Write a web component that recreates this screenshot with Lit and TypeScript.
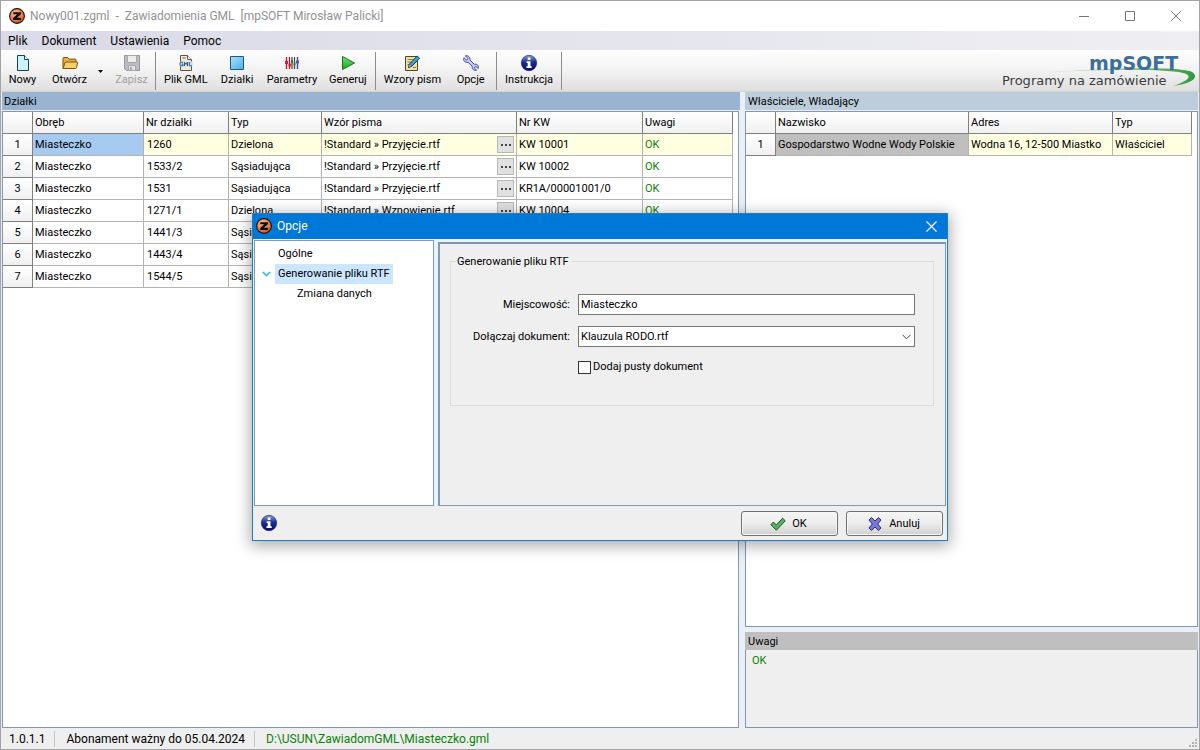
import { LitElement, html, svg, css, nothing } from "lit";
import { customElement, property, state } from "lit/decorators.js";
import { classMap } from "lit/directives/class-map.js";

const icons: Record<string, unknown> = {
  app: svg`
    <defs><radialGradient id="o" cx=".4" cy=".3" r=".8"><stop offset="0" stop-color="#ffb888"/><stop offset=".6" stop-color="#ee7840"/><stop offset="1" stop-color="#a8421a"/></radialGradient></defs>
    <circle cx="8" cy="8" r="7.400" fill="url(#o)" stroke="#1c1310" stroke-width="1.100"/>
    <path d="M4.300 4.200h7.600v2L7.900 9.800h4v2.200H4.200V9.900l4-3.600H4.300z" fill="#0c0806"/>`,
  nowy: svg`
    <path d="M2.500.5h7l4 4v11h-11z" fill="#c9f4fb" stroke="#1d3f52"/>
    <path d="M9.500.5v4h4" fill="#fff" stroke="#1d3f52"/>`,
  otworz: svg`
    <path d="M1 13.500V3.200q0-.7.7-.7h4l1.500 1.600h6q.8 0 .8.8v2" fill="#e8b03c" stroke="#7b5312"/>
    <path d="M1 13.500 3 7.700q.2-.7 1-.7h11.200q.6 0 .5.7l-1.300 5.100q-.2.7-1 .7z" fill="#f7d06c" stroke="#7b5312"/>`,
  zapisz: svg`
    <path d="M.5.5h15v15h-13l-2-2z" fill="#a9a9b6" stroke="#77777f"/>
    <path d="M3.500.5h9v7h-9z" fill="#ece9e6" stroke="#8c8c92"/>
    <path d="M4.500 10.500h7v5h-7z" fill="#dcdce0" stroke="#8c8c92"/>
    <path d="M6 12h2v3H6z" fill="#8c8c92"/>`,
  gml: svg`
    <path d="M2.500.5h7l4 4v11h-11z" fill="#f3ead2" stroke="#5b5648"/>
    <path d="M9.500.5v4h4M4.500 3h3" fill="#fff" stroke="#5b5648"/>
    <path d="M1.500 6.500h13v5h-13z" fill="#c8dcf0"/>
    <path d="M5 7.200H3Q2 7.200 2 9t1 1.800h2V9H4M6.500 11V7.200L8 9.500l1.500-2.300V11M11.300 7v3.800H14" fill="none" stroke="#2e5f94"/>`,
  dzialki: svg`
    <defs><linearGradient id="b" x2="1" y2="1"><stop offset="0" stop-color="#a9e0fb"/><stop offset="1" stop-color="#4db0e6"/></linearGradient></defs>
    <path d="M1.500 1.500h13v13h-13z" fill="url(#b)" stroke="#1d5a80"/>`,
  parametry: svg`
    <path d="M2.500 2v12M5.500 2v12" stroke="#c8102e" stroke-width="1.300"/>
    <path d="M8 2v12M10.500 2v12" stroke="#33502c" stroke-width="1.200"/>
    <path d="M13.500 2v12" stroke="#4b3ec0" stroke-width="1.400"/>
    <path d="M1 6h3v3H1zM4.500 8.500h2.500v3H4.500z" fill="#d6203a"/>
    <path d="M7 5h2v3H7zM9.500 7.500h2v3h-2z" fill="#2f7c33"/>
    <path d="M12 5.500h3v3h-3z" fill="#5d50d8"/>`,
  generuj: svg`
    <defs><linearGradient id="g" x2="0" y2="1"><stop offset="0" stop-color="#7be27a"/><stop offset="1" stop-color="#14a51c"/></linearGradient></defs>
    <path d="M2.500 1.500 14.500 8l-12 6.500z" fill="url(#g)" stroke="#14701a" stroke-linejoin="round"/>`,
  wzory: svg`
    <path d="M1.500 1.500h12v14h-12z" fill="#efe1a0" stroke="#4a4a2a"/>
    <path d="M3.500 4.500h7M3.500 7h5M3.500 9.500h3M9 12.500h3" stroke="#8b8350"/>
    <path d="M4.500 12.500 5.500 9l7.700-8 2.300 2.200-7.600 8z" fill="#3da0da" stroke="#123f66"/>
    <path d="M4.500 12.500 5.500 9l2.400 2.200z" fill="#f2c48a" stroke="#123f66" stroke-width=".6"/>`,
  opcje: svg`
    <path d="M2.300.9 5 3.500 3.600 5.200.9 2.700C-.2 5.200 1.700 8 5 7.300l4.200 3.900c-.5 2.900 2 4.900 4.400 4L11.300 13l1.400-1.700 2.500 2.200c.9-2.700-1.100-4.900-4-4.300L7 5.200C7.600 2.200 5 .1 2.300.9z" fill="#c3ccfa" stroke="#4747a8" stroke-linejoin="round"/>`,
  info: svg`
    <defs><linearGradient id="i" x2="0" y2="1"><stop offset="0" stop-color="#8e9fd8"/><stop offset=".45" stop-color="#1c2f92"/><stop offset="1" stop-color="#04086a"/></linearGradient></defs>
    <circle cx="8" cy="8" r="7.700" fill="url(#i)" stroke="#0d1a6e" stroke-width=".6"/>
    <path d="M6.700 2.600h2.800v2.500H6.700zM5.600 6.300h3.900v4.900h1.200v1.700H5.400v-1.700h1.300V8H5.600z" fill="#fff"/>`,
  ok: svg`<path d="M.8 8.700 3.400 6l2.900 3 6.300-6.800 2.700 2.600-8.900 9.400z" fill="#58b068" stroke="#1c5a24" stroke-linejoin="round"/>`,
  anuluj: svg`<path d="M2 4 4.600 1.600 8 5l3.400-3.400L14 4l-3.300 4 3.300 4-2.600 2.400L8 11l-3.400 3.400L2 12l3.300-4z" fill="#7a78da" stroke="#2c2a78" stroke-linejoin="round"/>`,
};

@customElement("ui-icon")
class UiIcon extends LitElement {
  @property() name = "";
  static styles = css`
    :host { display: block; width: 16px; height: 16px; flex: none; }
    svg { display: block; width: 100%; height: 100%; overflow: visible; }
  `;
  render() {
    return html`<svg viewBox="0 0 16 16" aria-hidden="true">${icons[this.name]}</svg>`;
  }
}

type Tool = { icon: string; label: string; disabled?: boolean; drop?: boolean };
const tools: Tool[][] = [
  [{ icon: "nowy", label: "Nowy" }, { icon: "otworz", label: "Otwórz", drop: true }, { icon: "zapisz", label: "Zapisz", disabled: true }],
  [{ icon: "gml", label: "Plik GML" }, { icon: "dzialki", label: "Działki" }, { icon: "parametry", label: "Parametry" }, { icon: "generuj", label: "Generuj" }],
  [{ icon: "wzory", label: "Wzory pism" }, { icon: "opcje", label: "Opcje" }],
  [{ icon: "info", label: "Instrukcja" }],
];

const parcels = [
  ["1260", "Dzielona", "Przyjęcie", "KW 10001"],
  ["1533/2", "Sąsiadująca", "Przyjęcie", "KW 10002"],
  ["1531", "Sąsiadująca", "Przyjęcie", "KR1A/00001001/0"],
  ["1271/1", "Dzielona", "Wznowienie", "KW 10004"],
  ["1441/3", "Sąsiadująca", "Przyjęcie", "KW 10005"],
  ["1443/4", "Sąsiadująca", "Przyjęcie", "KW 10006"],
  ["1544/5", "Sąsiadująca", "Przyjęcie", "KW 10007"],
];

@customElement("options-dialog")
class OptionsDialog extends LitElement {
  static styles = css`
    * { box-sizing: border-box; }
    :host {
      display: flex; flex-direction: column; background: #efefef; border: 1px solid #1f7bc4;
      box-shadow: 0 3px 14px 2px rgba(0, 0, 0, .32); font: 11px/14px Roboto, "Noto Sans", sans-serif; color: #000;
    }
    button, input, select { font: inherit; color: inherit; margin: 0; }
    .title { display: flex; align-items: center; gap: 5px; height: 25px; padding: 0 0 1px 3px; background: #0078d7; color: #fff; }
    .title h2 { flex: 1; margin: 0; font-size: 12px; font-weight: 400; }
    .close { width: 31px; height: 24px; padding: 0; border: 0; background: none; display: grid; place-items: center; }
    .body { flex: 1; display: flex; gap: 4px; padding: 1px 1px 0; background: #eaf2fa; }
    .tree { width: 180px; border: 1px solid #7d9ab8; background: #fff; margin: 0; padding: 3px 0 0 7px; list-style: none; }
    .node { display: flex; align-items: center; height: 20px; }
    .node .twist { width: 9px; height: 8px; margin-right: 4px; }
    .node a { color: #000; text-decoration: none; line-height: 20px; padding: 0 3px; }
    .node.selected a { background: #cce6ff; }
    .node.child { padding-left: 19px; }
    .page { flex: 1; margin-top: 2px; border: 1px solid #7d9ab8; border-top: 2px solid #8193b5; border-left: 2px solid #7d9ab8; padding: 10px 11px 0 10px; background: #efefef; }
    fieldset { margin: 0; padding: 25px 18px 29px; border: 1px solid #dcdcdc; min-width: 0; }
    legend { padding: 1px 2px 0 1px; margin-left: -13px; }
    .form { display: grid; grid-template-columns: 101px 1fr; column-gap: 8px; row-gap: 11px; align-items: center; }
    .form .lab { text-align: right; white-space: nowrap; }
    .field { width: 100%; height: 21px; padding: 0 2px; border: 1px solid #767676; border-radius: 0; background: #fff; outline: 0; }
    .combo { display: grid; }
    .combo > * { grid-area: 1 / 1; }
    .combo select { appearance: none; }
    .combo svg { justify-self: end; align-self: center; margin-right: 4px; pointer-events: none; }
    .check { grid-column: 2; display: flex; align-items: center; gap: 2px; height: 18px; }
    .check input { appearance: none; width: 13px; height: 13px; border: 1px solid #333; background: #fff; }
    .foot { display: flex; align-items: center; height: 34px; padding: 0 4px 0 8px; gap: 8px; }
    .spacer { flex: 1; }
    .plain { padding: 0; border: 0; background: none; }
    .push { display: flex; align-items: center; justify-content: center; gap: 6px; width: 97px; height: 25px; padding: 1px 8px 0 6px; border: 1px solid #707070; border-radius: 3px; background: linear-gradient(#f6f6f6, #ececec 50%, #d0d0d0); box-shadow: inset 0 0 0 1px #f6f6f6; }
  `;
  render() {
    return html`
      <div class="title">
        <ui-icon name="app"></ui-icon><h2>Opcje</h2>
        <button class="close" aria-label="Zamknij"><svg width="11" height="11" viewBox="0 0 11 11"><path d="M.5.5l10 10M10.500.5l-10 10" stroke="#fff" stroke-width="1.200"/></svg></button>
      </div>
      <div class="body">
        <ul class="tree">
          <li class="node"><span class="twist"></span><a href="#ogolne">Ogólne</a></li>
          <li class="node selected"><svg class="twist" viewBox="0 0 9 8"><path d="M.8 2l3.700 3.600L8.200 2" fill="none" stroke="#35b4e6" stroke-width="1.600"/></svg><a href="#rtf">Generowanie pliku RTF</a></li>
          <li class="node child"><span class="twist"></span><a href="#dane">Zmiana danych</a></li>
        </ul>
        <div class="page">
          <fieldset>
            <legend>Generowanie pliku RTF</legend>
            <div class="form">
              <label class="lab" for="town">Miejscowość:</label>
              <input class="field" id="town" type="text" .value=${"Miasteczko"} />
              <label class="lab" for="doc">Dołączaj dokument:</label>
              <div class="combo">
                <select class="field" id="doc"><option>Klauzula RODO.rtf</option></select>
                <svg width="9" height="6" viewBox="0 0 9 6"><path d="M.5.8l4 4 4-4" fill="none" stroke="#444"/></svg>
              </div>
              <div class="check"><input id="empty" type="checkbox" /><label for="empty">Dodaj pusty dokument</label></div>
            </div>
          </fieldset>
        </div>
      </div>
      <div class="foot">
        <button class="plain" aria-label="Informacje"><ui-icon name="info"></ui-icon></button>
        <span class="spacer"></span>
        <button class="push"><ui-icon name="ok"></ui-icon>OK</button>
        <button class="push"><ui-icon name="anuluj"></ui-icon>Anuluj</button>
      </div>`;
  }
}

@customElement("app-root")
class AppRoot extends LitElement {
  @state() private row = 0;

  static styles = css`
    * { box-sizing: border-box; }
    :host {
      position: relative; display: flex; flex-direction: column; box-sizing: border-box; height: 100vh; overflow: hidden;
      border: 1px solid #a3a3a8; background: #efefef; color: #000; font: 11px/14px Roboto, "Noto Sans", sans-serif;
    }
    button { font: inherit; color: inherit; margin: 0; padding: 0; border: 0; background: none; }
    .title { display: flex; align-items: center; height: 30px; padding-left: 8px; background: #fff; color: #929292; }
    .title h1 { flex: 1; margin: 0 0 0 5px; font-size: 12px; font-weight: 400; white-space: pre; }
    .sys { width: 46px; height: 30px; display: grid; place-items: center; }
    .menu { display: flex; gap: 14px; height: 19px; padding-left: 7px; align-items: center; font-size: 12px; background: linear-gradient(90deg, #dadae8, #efeff3); }
    .menu a { color: #000; text-decoration: none; }
    .tools { display: flex; height: 42px; padding: 2px 0 1px; background: linear-gradient(#fefefe, #f4f4f4 45%, #dfdfdf); border-bottom: 1px solid #d4d4d4; }
    .group { display: flex; gap: 4px; padding: 0 4px; border-right: 1px solid #8c8c8c; }
    .group:first-child { padding: 0 2px 0 0; }
    .tool { display: flex; flex-direction: column; align-items: center; gap: 2px; padding: 3px 4px 0; min-width: 43px; white-space: nowrap; }
    .tool:disabled { color: #a0a0a0; }
    .tool:disabled ui-icon { opacity: .75; }
    .drop { width: 11px; display: grid; place-items: center; }
    .brand { margin-left: auto; width: 196px; height: 39px; display: block; }
    .brand .name { font: 700 19px "DejaVu Sans", sans-serif; fill: #3b6f9c; }
    .brand .motto { font: 400 13px "DejaVu Sans", sans-serif; fill: #3c3c3c; }
    .work { flex: 1; min-height: 0; display: flex; gap: 5px; padding-left: 1px; background: #e9eff6; }
    .left { flex: 1; min-width: 0; display: flex; flex-direction: column; }
    .right { width: 454px; padding-right: 1px; display: flex; flex-direction: column; }
    .cap { height: 18px; margin: 0; padding: 1px 2px 0; font-size: 11px; font-weight: 400; line-height: 17px; }
    .right .cap { padding-left: 3px; }
    .cap.main { background: #99b3d1; }
    .cap.side { background: #becddc; }
    .cap.note { background: #bfbfbf; margin-top: 5px; }
    .grid { flex: 1; min-height: 0; margin: 1px 1px 0 0; border: 1px solid #8496ae; background: #fff; overflow: hidden; }
    .right .grid { margin-right: 0; }
    .note-box { height: 78px; border: 1px solid #8496ae; border-top: 0; background: #efefef; padding: 4px 6px; color: #0a820a; }
    table { table-layout: fixed; border-collapse: separate; border-spacing: 0; width: 730px; }
    table.owners { width: 446px; }
    th, td { height: 22px; padding: 0 2px; text-align: left; font-weight: 400; white-space: nowrap; overflow: hidden; border-right: 1px solid #b4b4b4; border-bottom: 1px solid #b4b4b4; }
    thead th, tbody th { background: linear-gradient(#fff, #f0f0f0); border-color: #808080; }
    tbody th { text-align: center; }
    .current td { background: #ffffe1; }
    .current td.cell { background: #a6caf0; }
    .owners .current td.cell { background: #bfbfbf; }
    .num { padding-left: 3px; }
    .ok { color: #0a820a; }
    .file { display: flex; align-items: center; justify-content: space-between; }
    .more { display: flex; align-items: center; justify-content: center; gap: 2px; width: 17px; height: 17px; border: 1px solid #b8b8b8; background: #e1e1e1; }
    .more i { width: 2px; height: 2px; background: #444; }
    .c30 { width: 30px; } .c111 { width: 111px; } .c85 { width: 85px; } .c93 { width: 93px; } .c195 { width: 195px; }
    .c126 { width: 126px; } .c90 { width: 90px; } .c193 { width: 193px; } .c144 { width: 144px; } .c79 { width: 79px; }
    .status { display: flex; align-items: center; height: 21px; padding-left: 8px; font-size: 12px; }
    .status span { padding-right: 9px; margin-right: 11px; border-right: 1px solid #c4c4c4; line-height: 16px; }
    .status .path { border: 0; color: #0a820a; flex: 1; }
    .grip { align-self: flex-end; }
    options-dialog { position: absolute; top: 212px; left: 0; right: 0; margin: 0 auto; width: 696px; height: 328px; }
  `;

  private tool(t: Tool) {
    return html`<button class="tool" ?disabled=${!!t.disabled}><ui-icon name=${t.icon}></ui-icon>${t.label}</button>
      ${t.drop ? html`<button class="drop" aria-label="Ostatnie pliki"><svg width="5" height="3" viewBox="0 0 5 3"><path d="M0 0h5L2.500 3z"/></svg></button>` : nothing}`;
  }

  render() {
    return html`
      <header class="title">
        <ui-icon name="app"></ui-icon>
        <h1>Nowy001.zgml  -  Zawiadomienia GML  [mpSOFT Mirosław Palicki]</h1>
        <button class="sys" aria-label="Minimalizuj"><svg width="10" height="10"><path d="M0 5.500h10" stroke="#777"/></svg></button>
        <button class="sys" aria-label="Maksymalizuj"><svg width="10" height="10"><path d="M.5.5h9v9h-9z" fill="none" stroke="#777"/></svg></button>
        <button class="sys" aria-label="Zamknij"><svg width="10" height="10"><path d="M0 0l10 10M10 0L0 10" stroke="#777"/></svg></button>
      </header>
      <nav class="menu">${["Plik", "Dokument", "Ustawienia", "Pomoc"].map((m) => html`<a href="#${m}">${m}</a>`)}</nav>
      <div class="tools">
        ${tools.map((g) => html`<div class="group">${g.map((t) => this.tool(t))}</div>`)}
        <svg class="brand" viewBox="0 0 196 39">
          <defs><linearGradient id="sw"><stop offset="0" stop-color="#9fcf9f" stop-opacity="0"/><stop offset=".6" stop-color="#8cc68c"/><stop offset="1" stop-color="#2f9a3c"/></linearGradient></defs>
          <path d="M32 21C80 17 176 13 189 20c9 6-3 12-19 14 12-4 20-9 13-12C170 16 90 18 32 21z" fill="url(#sw)"/>
          <text class="name" x="86" y="18">mpSOFT</text>
          <text class="motto" x="-1" y="33">Programy na zamówienie</text>
        </svg>
      </div>
      <main class="work">
        <section class="left">
          <h2 class="cap main">Działki</h2>
          <div class="grid">
            <table>
              <colgroup><col class="c30" /><col class="c111" /><col class="c85" /><col class="c93" /><col class="c195" /><col class="c126" /><col class="c90" /></colgroup>
              <thead><tr><th></th><th>Obręb</th><th>Nr działki</th><th>Typ</th><th>Wzór pisma</th><th>Nr KW</th><th>Uwagi</th></tr></thead>
              <tbody>
                ${parcels.map(([nr, typ, wzor, kw], i) => html`
                  <tr class=${classMap({ current: i === this.row })} @click=${() => (this.row = i)}>
                    <th>${i + 1}</th><td class="cell">Miasteczko</td><td class="num">${nr}</td><td>${typ}</td>
                    <td><div class="file">!Standard » ${wzor}.rtf<button class="more" aria-label="Wybierz wzór"><i></i><i></i><i></i></button></div></td>
                    <td>${kw}</td><td class="ok">OK</td>
                  </tr>`)}
              </tbody>
            </table>
          </div>
        </section>
        <section class="right">
          <h2 class="cap side">Właściciele, Władający</h2>
          <div class="grid">
            <table class="owners">
              <colgroup><col class="c30" /><col class="c193" /><col class="c144" /><col class="c79" /></colgroup>
              <thead><tr><th></th><th>Nazwisko</th><th>Adres</th><th>Typ</th></tr></thead>
              <tbody><tr class="current"><th>1</th><td class="cell">Gospodarstwo Wodne Wody Polskie</td><td>Wodna 16, 12-500 Miastko</td><td>Właściciel</td></tr></tbody>
            </table>
          </div>
          <h2 class="cap note">Uwagi</h2>
          <div class="note-box">OK</div>
        </section>
      </main>
      <footer class="status">
        <span>1.0.1.1</span><span>Abonament ważny do 05.04.2024</span><span class="path">D:\\USUN\\ZawiadomGML\\Miasteczko.gml</span>
        <svg class="grip" width="11" height="11" fill="#b4b4b4"><path d="M7 1h2v2H7zM4 4h2v2H4zM7 4h2v2H7zM1 7h2v2H1zM4 7h2v2H4zM7 7h2v2H7z"/></svg>
      </footer>
      <options-dialog role="dialog" aria-label="Opcje"></options-dialog>`;
  }
}
